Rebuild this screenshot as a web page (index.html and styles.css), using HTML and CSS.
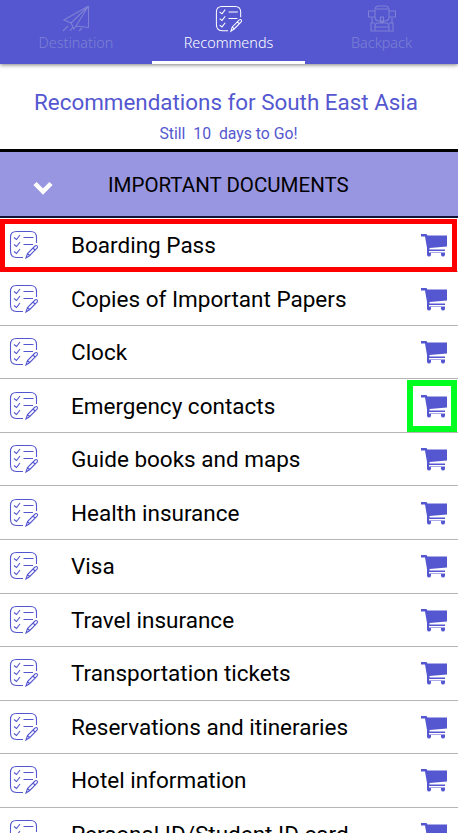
FILE: index.html
```html
<!DOCTYPE html>
<html lang="en">
<head>
<meta charset="utf-8">
<title>Recommends</title>
<link rel="stylesheet" href="styles.css">
</head>
<body>
<svg class="defs" aria-hidden="true">
  <symbol id="list" viewBox="0 0 30 30">
    <path d="M14 27.500H7.500Q1.500 27.500 1.500 21V7.500Q1.500 1.500 7.500 1.500H21.500Q27.500 1.500 27.500 7.500V13M5 7.500l2.500 2L11 5M5 14.500l2.500 2L11 12M5 21.500l2.500 2L11 19M14.500 7.500H24.500M14.500 14.500H24M17 28l1.500-4.500 7.500-7.500q1.500-1 2.200 0t-.2 2.200l-7.500 7.500zM24 18l2.500 2.500M18.500 23.500l2.500 2.500"/>
  </symbol>
  <symbol id="cart" viewBox="0 0 27 23">
    <path d="M0 0H5.500L6.500 1.500H26V12.500L8.500 14V15.500H24V17H8V18.500H24V21Q23.500 22.500 22 22.500T20 21V19H10V21Q9.500 22.500 8 22.500T6 21V14L4 2.500H0z"/>
  </symbol>
</svg>
<nav class="tabs">
  <div class="tab">
    <svg class="tab-icon" viewBox="0 0 28 28"><path d="M26.500 1L2 15l7 3L26.500 1 14 21l12.500 1.500V1M9 18l3 6 2-3M1 26l5-5M8 26l3-4M17 26l3-3"/></svg>
    <span>Destination</span>
  </div>
  <div class="tab active">
    <svg class="tab-icon"><use href="#list"/></svg>
    <span>Recommends</span>
  </div>
  <div class="tab">
    <svg class="tab-icon" viewBox="0 0 28 28"><path d="M7 5Q7 1 11 1h6q4 0 4 4v7q0 4-4 4h-6q-4 0-4-4zM7 6H.500v6H7M21 6h6.500v6H21M12.500 12h3v5h-3zM8 4h12M4 13v5M24 13v5M7 26V21q0-3 3-3h8q3 0 3 3v5zM7 18H3v8h4M21 18h4v8h-4M7 22h14"/></svg>
    <span>Backpack</span>
  </div>
</nav>
<header class="intro">
  <h1>Recommendations for South East Asia</h1>
  <p>Still&nbsp; 10&nbsp; days to Go!</p>
</header>
<section class="group">
  <svg class="chevron" viewBox="0 0 20 14"><path d="M2 2.500L10 10.500L18 2.500"/></svg>
  <h2>IMPORTANT DOCUMENTS</h2>
</section>
<ul class="items">
  <li class="picked"><svg class="list"><use href="#list"/></svg><span>Boarding Pass</span><svg class="cart"><use href="#cart"/></svg></li>
  <li><svg class="list"><use href="#list"/></svg><span>Copies of Important Papers</span><svg class="cart"><use href="#cart"/></svg></li>
  <li><svg class="list"><use href="#list"/></svg><span>Clock</span><svg class="cart"><use href="#cart"/></svg></li>
  <li class="cart-picked"><svg class="list"><use href="#list"/></svg><span>Emergency contacts</span><svg class="cart"><use href="#cart"/></svg></li>
  <li><svg class="list"><use href="#list"/></svg><span>Guide books and maps</span><svg class="cart"><use href="#cart"/></svg></li>
  <li><svg class="list"><use href="#list"/></svg><span>Health insurance</span><svg class="cart"><use href="#cart"/></svg></li>
  <li><svg class="list"><use href="#list"/></svg><span>Visa</span><svg class="cart"><use href="#cart"/></svg></li>
  <li><svg class="list"><use href="#list"/></svg><span>Travel insurance</span><svg class="cart"><use href="#cart"/></svg></li>
  <li><svg class="list"><use href="#list"/></svg><span>Transportation tickets</span><svg class="cart"><use href="#cart"/></svg></li>
  <li><svg class="list"><use href="#list"/></svg><span>Reservations and itineraries</span><svg class="cart"><use href="#cart"/></svg></li>
  <li><svg class="list"><use href="#list"/></svg><span>Hotel information</span><svg class="cart"><use href="#cart"/></svg></li>
  <li><svg class="list"><use href="#list"/></svg><span>Personal ID/Student ID card</span><svg class="cart"><use href="#cart"/></svg></li>
</ul>
</body>
</html>
```
FILE: styles.css
```css
*, *::after { box-sizing: border-box; }
body {
  margin: 0;
  height: 833px;
  overflow: hidden;
  background: #fff;
  color: #000;
  font-family: Roboto, "Liberation Sans", sans-serif;
}
h1, h2, p, ul { margin: 0; padding: 0; font-weight: 400; }
.defs { position: absolute; width: 0; height: 0; }

.tabs {
  display: grid;
  grid-template-columns: 152px 153px 153px;
  height: 64px;
  background: #5457cf;
  box-shadow: 0 1px 4px rgba(0, 0, 0, .5);
}
.tab {
  display: flex;
  flex-direction: column;
  align-items: center;
  padding-top: 5px;
  color: #7e80d5;
  font: 350 14.4px/19px "Noto Sans", "Open Sans", sans-serif;
  border-bottom: 3px solid transparent;
}
.tab.active { color: #fff; border-bottom-color: #fff; }
.tab-icon {
  width: 28px;
  height: 28px;
  fill: none;
  stroke: currentColor;
  stroke-width: 1.1;
}
.tab.active .tab-icon { width: 30px; }
.tab span { white-space: nowrap; }

.intro {
  height: 85px;
  padding-top: 24px;
  text-align: center;
  color: #5457cf;
}
.intro h1 { font-size: 22.4px; line-height: 28px; padding-right: 6px; }
.intro p { font-size: 15.8px; line-height: 20px; margin-top: 8px; padding-right: 1px; }

.group {
  display: flex;
  align-items: center;
  height: 69px;
  background: #9896e1;
  border-top: 3px solid #000;
  border-bottom: 2px solid #111133;
}
.chevron {
  width: 20px;
  height: 14px;
  margin: 7px 0 0 33px;
  fill: none;
  stroke: #fff;
  stroke-width: 4.5;
}
.group h2 { margin: 1px 0 0 55px; font-size: 20.5px; line-height: 24px; }

.items { list-style: none; padding-top: .7px; }
.items li {
  position: relative;
  display: flex;
  align-items: center;
  height: 53.55px;
  padding: 0 10px 0 8.5px;
  border-bottom: 1px solid #b5b5b5;
}
.items span { flex: 1; margin-left: 32.5px; font-size: 22.5px; line-height: 28px; white-space: nowrap; }
.list {
  width: 30px;
  height: 30px;
  fill: none;
  stroke: #5457cf;
  stroke-width: 1.1;
}
.cart { width: 27px; height: 23px; margin-top: 1px; fill: #5457cf; }
.picked::after, .cart-picked::after { content: ""; position: absolute; }
.picked::after { inset: 0 1px -1px 0; border: 5px solid #f00; }
.cart-picked::after { top: 1px; right: 1px; width: 50px; height: 52px; border: 6px solid #00ff21; }
```
